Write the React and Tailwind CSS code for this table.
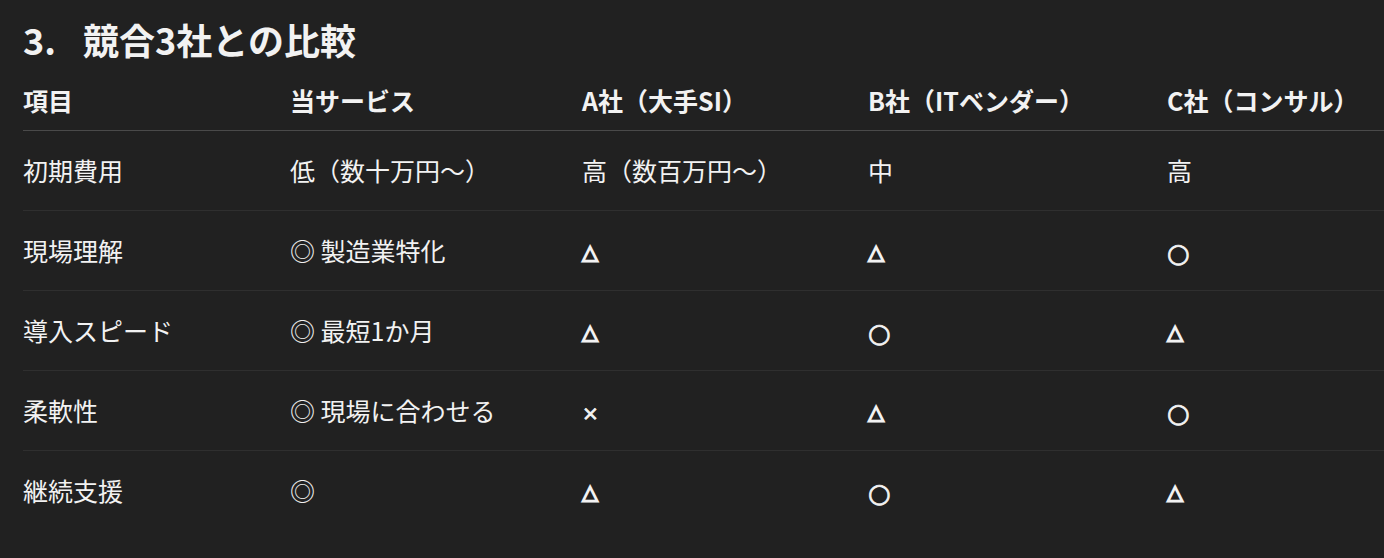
import React from 'react';

const headers = ['項目', '当サービス', 'A社（大手SI）', 'B社（ITベンダー）', 'C社（コンサル）'];

const rows = [
  ['初期費用', '低（数十万円〜）', '高（数百万円〜）', '中', '高'],
  ['現場理解', '◎ 製造業特化', '△', '△', '○'],
  ['導入スピード', '◎ 最短1か月', '△', '○', '△'],
  ['柔軟性', '◎ 現場に合わせる', '×', '△', '○'],
  ['継続支援', '◎', '△', '○', '△'],
];

const colWidths = ['w-[267px]', 'w-[292px]', 'w-[286px]', 'w-[299px]', ''];

// small marks render narrower than CJK glyphs, with a heavier stroke
const Cell = ({ value }) => {
  if (value === '△') return <span className="inline-block leading-none align-middle -mt-[3px] text-[21px] font-['DejaVu_Sans',sans-serif] [-webkit-text-stroke:1.6px_currentColor]">△</span>;
  if (value === '○') return <span className="inline-block leading-none align-middle -mt-[3px] text-[26px] font-['DejaVu_Sans',sans-serif] [-webkit-text-stroke:0.8px_currentColor]">○</span>;
  if (value === '×') return <span className="inline-block leading-none align-middle -mt-[3px] text-[20px] font-['DejaVu_Sans',sans-serif] [-webkit-text-stroke:0.8px_currentColor]">×</span>;
  return value;
};

export default function App() {
  return (
    <div className="w-[1384px] h-[558px] overflow-hidden bg-[#212121] text-[#f2f2f2] font-['Noto_Sans_CJK_JP',sans-serif]">
      <h2 className="px-[23px] pt-[16px] text-[36px] font-bold leading-[46px] flex">
        <span className="w-[60px]">3.</span>
        <span>競合3社との比較</span>
      </h2>
      <table className="ml-[23px] mt-[8px] w-[1361px] border-collapse text-[25px] leading-[36px] text-left">
        <thead>
          <tr className="border-b border-[#4a4a4a]">
            {headers.map((h, i) => (
              <th key={h} className={`${colWidths[i]} h-[60px] p-0 font-bold whitespace-nowrap`}>{h}</th>
            ))}
          </tr>
        </thead>
        <tbody>
          {rows.map((r, ri) => (
            <tr key={r[0]} className={ri < rows.length - 1 ? 'border-b border-[#2f2f2f]' : ''}>
              {r.map((c, i) => (
                <td key={i} className="p-0 whitespace-nowrap h-[80px]">
                  <Cell value={c} />
                </td>
              ))}
            </tr>
          ))}
        </tbody>
      </table>
    </div>
  );
}
